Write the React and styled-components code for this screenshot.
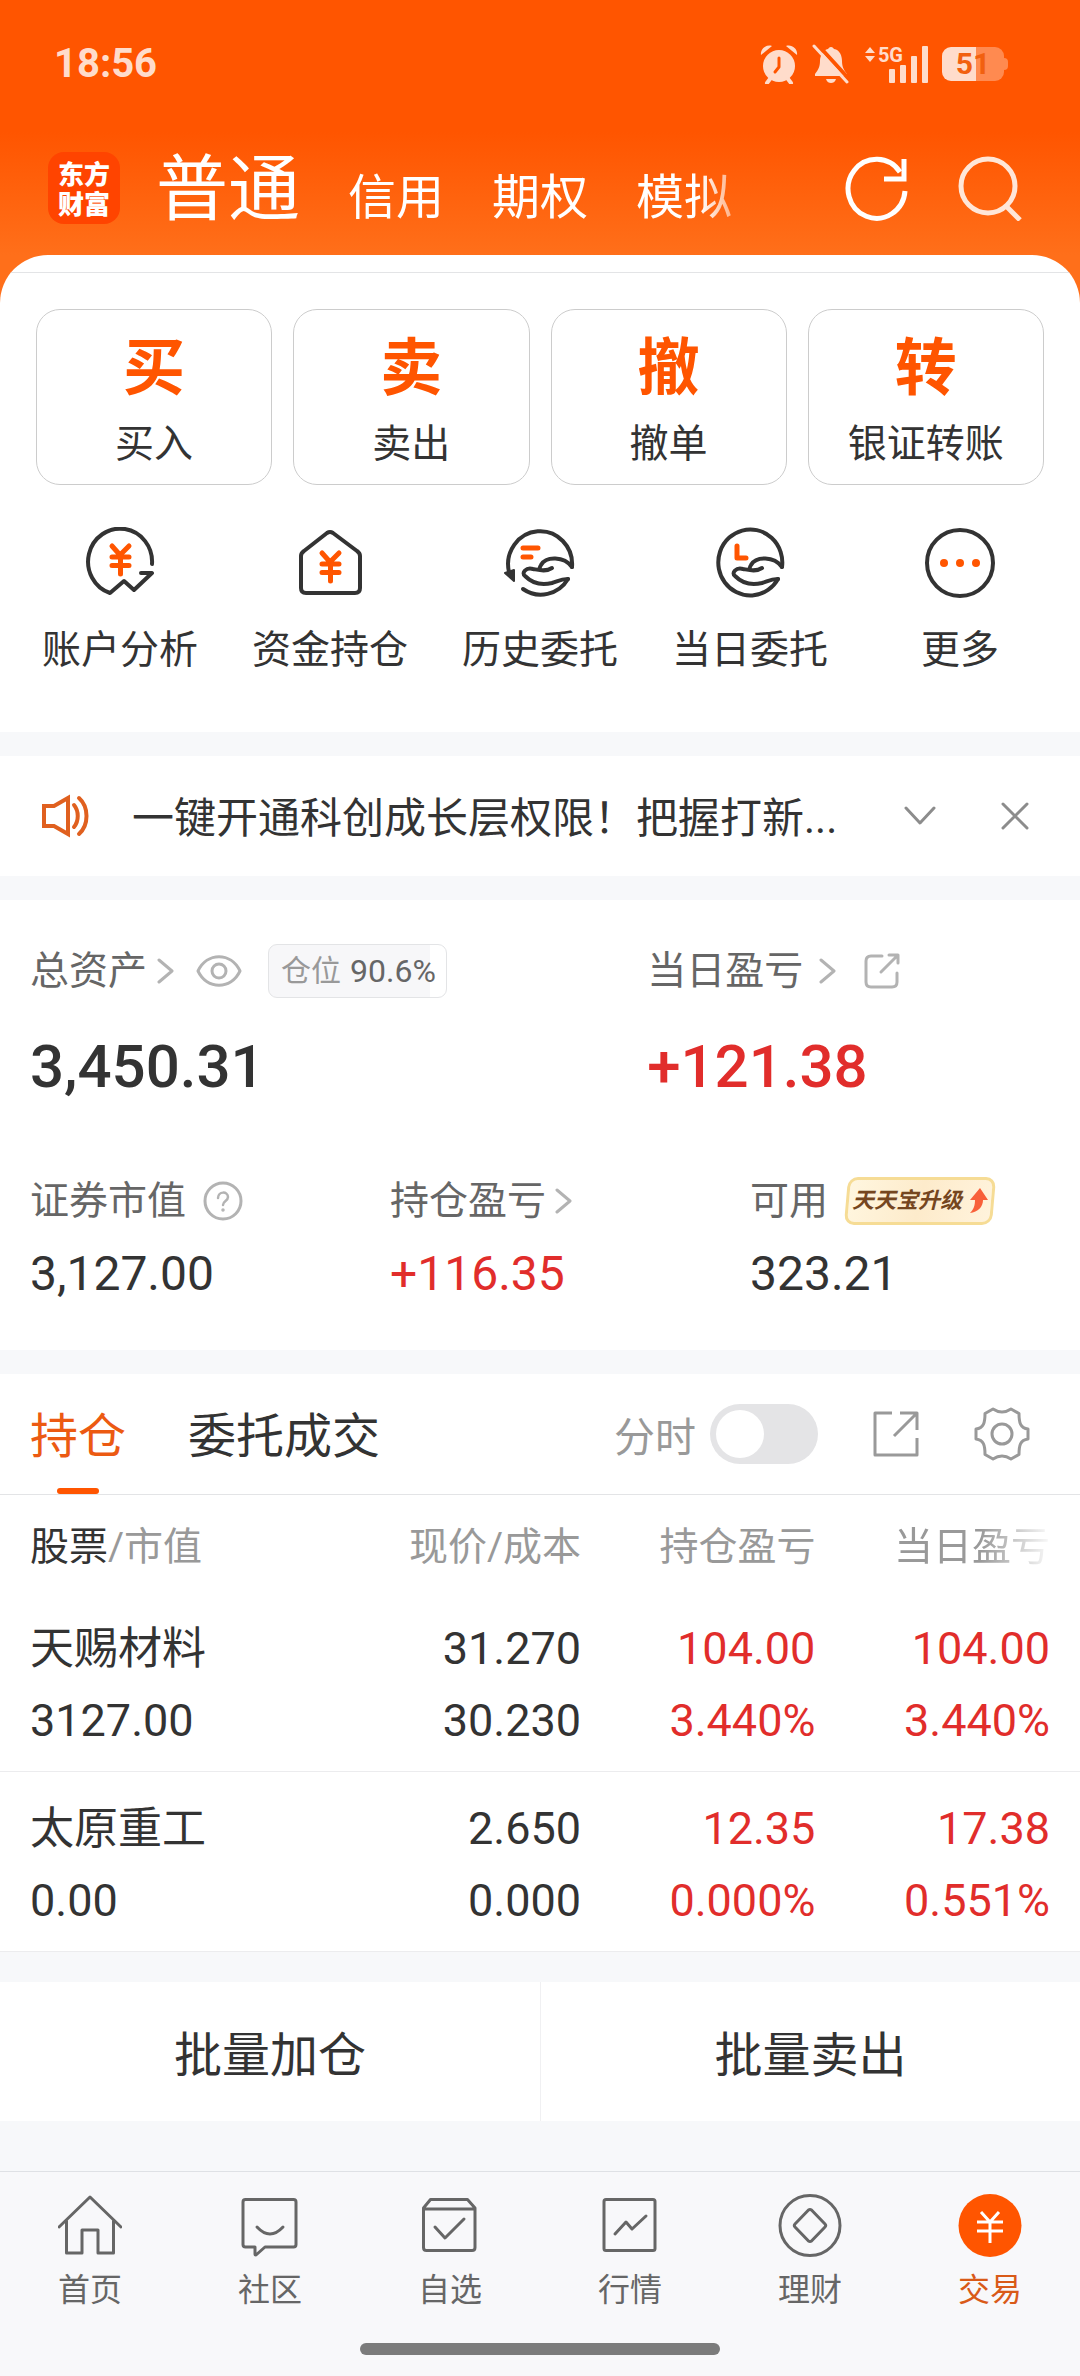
import React, { useState } from "react";
import styled, { createGlobalStyle, css } from "styled-components";

const color = {
  brand: "#ff5500",
  brandText: "#ec5a12",
  text: "#333333",
  sub: "#666666",
  mute: "#999999",
  faint: "#b3b3b3",
  rise: "#e12d2b",
  line: "#e3e4e6",
  band: "#f7f8fa",
  status: "#ffdccb",
};

const GlobalStyle = createGlobalStyle`
  *, *::before, *::after { box-sizing: border-box; }
  body {
    margin: 0;
    background: ${color.band};
    color: ${color.text};
    font-family: Roboto, "Noto Sans CJK SC", sans-serif;
    font-weight: 400;
  }
  button {
    margin: 0;
    padding: 0;
    border: 0;
    background: none;
    color: inherit;
    font: inherit;
    cursor: pointer;
  }
  a { color: inherit; text-decoration: none; }
  h2, p, dl, dd, dt { margin: 0; font-weight: inherit; }
  svg { display: block; flex: none; }
`;

const Screen = styled.div`
  display: flex;
  flex-direction: column;
  min-height: 100vh;
`;

/* ---------- hero ---------- */

const Hero = styled.header`
  background: linear-gradient(#ff5500 0, #ff5500 132px, #ff6f1a 255px, #ff6f1a 100%);
`;

const StatusBar = styled.div`
  display: flex;
  align-items: center;
  justify-content: space-between;
  height: 128px;
  padding: 0 72px 0 54px;
  color: ${color.status};
`;

const Clock = styled.time`
  font-size: 40px;
  font-weight: 700;
  line-height: 48px;
`;

const StatusIcons = styled.div`
  display: flex;
  align-items: center;
  gap: 14px;
`;

const Signal = styled.div`
  display: flex;
  align-items: flex-start;
  height: 38px;
`;

const Network = styled.span`
  font-size: 20px;
  font-weight: 700;
  line-height: 20px;
`;

const Bars = styled.span`
  display: flex;
  align-items: flex-end;
  gap: 5px;
  height: 38px;
  margin-left: -14px;
`;

const Bar = styled.i`
  width: 6px;
  height: ${(p) => p.$h}px;
  border-radius: 1px;
  background: ${color.status};
`;

const Battery = styled.div`
  display: flex;
  align-items: center;
  &::after {
    content: "";
    width: 4px;
    height: 12px;
    border-radius: 0 4px 4px 0;
    background: #ff8a50;
  }
`;

const BatteryBody = styled.span`
  width: 62px;
  height: 34px;
  border-radius: 9px;
  background: linear-gradient(90deg, ${color.status} 55%, #ff8a50 55%);
  color: #f2600f;
  font-size: 30px;
  font-weight: 700;
  line-height: 34px;
  text-align: center;
`;

const TopBar = styled.div`
  display: flex;
  align-items: center;
  height: 127px;
  padding: 0 56px 8px 48px;
  color: #fff;
`;

const Logo = styled.a`
  display: grid;
  place-content: center;
  width: 72px;
  height: 72px;
  margin-right: 36px;
  border-radius: 16px;
  background: #ff4400;
  font-size: 26px;
  font-weight: 900;
  line-height: 30px;
  font-family: "Noto Sans CJK SC", sans-serif;
`;

const AccountTabs = styled.nav`
  display: flex;
  flex: 1;
  align-items: baseline;
  gap: 48px;
  padding-top: 12px;
  overflow: hidden;
  white-space: nowrap;
  mask-image: linear-gradient(90deg, #000 calc(100% - 84px), transparent calc(100% - 20px));
`;

const AccountTab = styled.button`
  font-size: ${(p) => (p.$active ? 72 : 48)}px;
  line-height: 80px;
`;

const TopActions = styled.div`
  display: flex;
  align-items: center;
  gap: 48px;
  margin-left: 60px;
`;

const Panel = styled.div`
  overflow: hidden;
  border-radius: 48px 48px 0 0;
  background: #fff;
  padding: 17px 0 58px;
`;

const Hairline = styled.hr`
  margin: 0 0 36px;
  border: 0;
  border-top: 1px solid ${color.line};
`;

const TradeGrid = styled.div`
  display: grid;
  grid-template-columns: repeat(4, 1fr);
  gap: 21px;
  padding: 0 36px;
`;

const TradeCard = styled.button`
  display: flex;
  flex-direction: column;
  align-items: center;
  gap: 13px;
  padding: 23px 0 14px;
  border: 1px solid #cccccc;
  border-radius: 24px;
`;

const TradeGlyph = styled.span`
  color: ${color.brand};
  font-size: 62px;
  font-weight: 700;
  line-height: 72px;
`;

const TradeLabel = styled.span`
  font-size: 39px;
  line-height: 52px;
`;

const QuickGrid = styled.nav`
  display: grid;
  grid-template-columns: repeat(5, 1fr);
  margin-top: 42px;
  padding: 0 15px;
`;

const QuickLink = styled.a`
  display: flex;
  flex-direction: column;
  align-items: center;
  gap: 27px;
  font-size: 39px;
  line-height: 48px;
`;

/* ---------- notice ---------- */

const Notice = styled.section`
  display: flex;
  align-items: center;
  height: 120px;
  margin-top: 24px;
  padding: 0 50px 0 40px;
  background: #fff;
`;

const NoticeText = styled.p`
  flex: 1;
  min-width: 0;
  margin-left: 40px;
  padding-top: 5px;
  overflow: hidden;
  white-space: nowrap;
  font-size: 42px;
  line-height: 60px;
`;

const NoticeActions = styled.div`
  display: flex;
  align-items: center;
  gap: 64px;
`;

/* ---------- assets ---------- */

const Assets = styled.section`
  margin-top: 24px;
  padding: 44px 0 52px;
  background: #fff;
`;

const StatRow = styled.dl`
  display: grid;
  grid-template-columns: ${(p) => p.$cols};
  & + & { margin-top: 80px; }
`;

const Stat = styled.div`
  padding-left: 30px;
`;

const StatLabel = styled.dt`
  display: flex;
  align-items: center;
  height: ${(p) => (p.$large ? 54 : 48)}px;
  color: ${color.sub};
  font-size: 39px;
  line-height: 48px;
  white-space: nowrap;
`;

const StatValue = styled.dd`
  margin-top: ${(p) => (p.$large ? 39 : 25)}px;
  color: ${(p) => (p.$rise ? color.rise : color.text)};
  font-size: ${(p) => (p.$large ? 60 : 48)}px;
  font-weight: ${(p) => (p.$large ? 500 : 400)};
  line-height: ${(p) => (p.$large ? 60 : 48)}px;
`;

const IconButton = styled.button`
  display: flex;
  margin-left: ${(p) => p.$gap || 0}px;
`;

const Position = styled.span`
  display: flex;
  align-items: center;
  gap: 9px;
  height: 54px;
  margin-left: 26px;
  padding: 0 10px 0 12px;
  border: 1px solid ${color.line};
  border-radius: 9px;
  background: linear-gradient(90deg, #f7f7f9 91%, #fff 91%);
  color: ${color.mute};
  font-size: 30px;
  strong { color: ${color.sub}; font-size: 32px; font-weight: 400; }
`;

const Upgrade = styled.button`
  position: relative;
  z-index: 0;
  display: flex;
  align-items: center;
  justify-content: center;
  gap: 6px;
  width: 148px;
  height: 48px;
  margin-left: 18px;
  color: #75461f;
  font-size: 22px;
  font-style: italic;
  font-weight: 700;
  &::before {
    content: "";
    position: absolute;
    inset: 0;
    z-index: -1;
    border: 3px solid #f6dc95;
    border-radius: 10px;
    background: linear-gradient(100deg, #fff6df, #fdebcb 50%, #fff3dc);
    transform: skewX(-5deg);
  }
`;

/* ---------- holdings ---------- */

const Holdings = styled.section`
  margin-top: 24px;
  background: #fff;
`;

const Toolbar = styled.div`
  display: flex;
  align-items: stretch;
  height: 121px;
  padding: 0 50px 0 30px;
  border-bottom: 1px solid ${color.line};
`;

const ViewTab = styled.button`
  display: flex;
  flex-direction: column;
  align-items: center;
  margin-right: 62px;
  padding-top: 6px;
  color: ${(p) => (p.$active ? color.brandText : color.text)};
  font-size: 48px;
  line-height: 114px;
  ${(p) =>
    p.$active &&
    css`
      &::after {
        content: "";
        width: 42px;
        height: 6px;
        margin-top: -6px;
        border-radius: 3px;
        background: ${color.brand};
      }
    `}
`;

const Tools = styled.div`
  display: flex;
  align-items: center;
  margin-left: auto;
`;

const SwitchLabel = styled.label`
  display: flex;
  align-items: center;
  gap: 14px;
  color: ${color.mute};
  font-size: 41px;
`;

const Switch = styled.input`
  appearance: none;
  width: 108px;
  height: 60px;
  margin: 0;
  padding: 6px;
  border-radius: 30px;
  background: #e4e4e6;
  &::before {
    content: "";
    display: block;
    width: 48px;
    height: 48px;
    border-radius: 50%;
    background: #fff;
  }
  &:checked { background: ${color.brand}; }
  &:checked::before { margin-left: auto; }
`;

const Table = styled.table`
  width: 100%;
  border-collapse: collapse;
  table-layout: fixed;
`;

const HeadCell = styled.th`
  width: ${(p) => p.$w || "auto"};
  height: 96px;
  padding: 0;
  color: ${color.mute};
  font-size: 39px;
  font-weight: 400;
  text-align: right;
  white-space: nowrap;
  &:first-child { padding-left: 30px; text-align: left; }
  &:last-child {
    padding-right: 30px;
    mask-image: linear-gradient(90deg, #000 calc(100% - 100px), transparent calc(100% - 26px));
  }
  b { color: ${color.text}; font-weight: 400; }
`;

const Row = styled.tr`
  border-bottom: 1px solid #ececee;
`;

const Cell = styled.td`
  height: 180px;
  padding: 8px 0 0;
  color: ${(p) => (p.$rise ? color.rise : color.text)};
  font-size: 45px;
  line-height: 72px;
  text-align: right;
  &:first-child { padding-left: 30px; text-align: left; }
  &:last-child { padding-right: 30px; }
`;

const Line = styled.div`
  font-size: ${(p) => (p.$name ? 44 : 45)}px;
`;

const BatchBar = styled.div`
  display: grid;
  grid-template-columns: 1fr 1fr;
  margin-top: 30px;
  background: #fff;
`;

const BatchButton = styled.button`
  height: 139px;
  font-size: 48px;
  & + & { border-left: 1px solid #f0f0f2; }
`;

/* ---------- bottom navigation ---------- */

const Footer = styled.footer`
  margin-top: auto;
  border-top: 1px solid #dfe1e5;
  background: #f8f8fa;
`;

const NavBar = styled.nav`
  display: grid;
  grid-template-columns: repeat(6, 1fr);
  padding-top: 22px;
`;

const NavLink = styled.a`
  display: flex;
  flex-direction: column;
  align-items: center;
  gap: 12px;
  color: ${(p) => (p.$active ? "#d95a18" : color.sub)};
  font-size: 32px;
  line-height: 40px;
`;

const HomeIndicator = styled.div`
  width: 33.3%;
  height: 12px;
  margin: 33px auto 21px;
  border-radius: 6px;
  background: #7b7b7b;
`;

/* ---------- icons ---------- */

const Icon = ({ w, h = w, sw = 3, stroke = "currentColor", children }) => (
  <svg width={w} height={h} viewBox={`0 0 ${w} ${h}`} fill="none" stroke={stroke}
    strokeWidth={sw} strokeLinecap="round" strokeLinejoin="round" aria-hidden="true">
    {children}
  </svg>
);

const AlarmIcon = () => (
  <Icon w={38} h={40} sw={4}>
    <circle cx="19" cy="22" r="16" fill="currentColor" stroke="none" />
    <path d="M1 11C0 5 6 0 12 2ZM37 11c1-6-5-11-11-9Z" fill="currentColor" stroke="none" />
    <path d="M10 35l-3 4M28 35l3 4" />
    <path d="M19 14v9l-4 5" stroke={color.brand} strokeWidth="3" />
  </Icon>
);

const BellOffIcon = () => (
  <Icon w={38} h={40} sw={3}>
    <path d="M19 3c2 0 2 1 3 2 6 1 8 7 8 12 0 6 2 9 5 13v2H3v-2c3-4 5-7 5-13 0-5 3-11 8-12 1-1 1-2 3-2Z" fill="currentColor" stroke="none" />
    <path d="M14 35h10c-1 3-3 4-5 4s-4-1-5-4Z" fill="currentColor" stroke="none" />
    <path d="M5 0l32 35" stroke={color.brand} strokeWidth="4" />
    <path d="M2 2l33 36" />
  </Icon>
);

const DataArrows = () => (
  <Icon w={14} h={18} sw={0}>
    <path d="M1 8L6 2l5 6ZM1 11h10l-5 6Z" fill="currentColor" />
  </Icon>
);

const RefreshIcon = () => (
  <Icon w={66} sw={5}>
    <path d="M61 36A28.500 29.500 0 1 1 56 17" strokeLinecap="butt" />
    <path d="M60 4v20H40" strokeLinecap="butt" strokeLinejoin="miter" />
  </Icon>
);

const SearchIcon = () => (
  <Icon w={66} sw={5} stroke="#ffe6d8">
    <circle cx="30" cy="31" r="27" />
    <path d="M48 51l14 14" strokeLinecap="butt" />
  </Icon>
);

const Yuan = ({ y = 0 }) => (
  <g stroke={color.brand} strokeWidth="5" transform={`translate(0 ${y})`}>
    <path d="M28 19l8 9 9-9M36.500 28v19M28 30h17M28 38.500h17" />
  </g>
);

const AnalysisIcon = () => (
  <Icon w={72} sw={4}>
    <path d="M68 37A32 33 0 1 0 26 66L40 54l10 9 18-17H57" />
    <Yuan />
  </Icon>
);

const FundsIcon = () => (
  <Icon w={72} sw={4}>
    <path d="M33 6q3-2 6 0l24 18q3 2 3 5v32q0 5-5 5H12q-5 0-5-5V29q0-3 3-5Z" />
    <Yuan y={7} />
  </Icon>
);

const Hand = () => (
  <path d="M68 40C60 29 42 29 37 38Q35 41 36 43M48 41c-6 4-13 2-19 1-7-2-12 4-8 7 6 6 15 10 27 7 6-2 9-4 16-4" />
);

const HistoryIcon = () => (
  <Icon w={72} sw={4}>
    <path d="M5 45A32 33 0 1 1 68 40" />
    <path d="M64 52A32 33 0 0 1 19 62" />
    <Hand />
    <path d="M1 46l9-3v11Z" fill="currentColor" strokeWidth="2" />
    <path d="M19 21h15M19 30h8" stroke={color.brand} strokeWidth="5" />
  </Icon>
);

const TodayIcon = () => (
  <Icon w={72} sw={4}>
    <path d="M64 52A32 33 0 1 1 68 40" />
    <Hand />
    <path d="M23 19v12h9" stroke={color.brand} strokeWidth="5" />
  </Icon>
);

const MoreIcon = () => (
  <Icon w={72} sw={4}>
    <circle cx="36" cy="36" r="33" />
    <g fill={color.brand} stroke="none">
      <circle cx="20" cy="36" r="4" /><circle cx="36" cy="36" r="4" /><circle cx="52" cy="36" r="4" />
    </g>
  </Icon>
);

const SpeakerIcon = () => (
  <Icon w={52} h={44} sw={4} stroke="#e0601f">
    <path d="M4 12h10L28 4v36L14 32H4Z" strokeLinejoin="miter" />
    <path d="M34 11c5 6 5 16 0 22M39 4c10 9 10 27 0 36" />
  </Icon>
);

const ChevronDown = () => <Icon w={32} h={20} sw={3} stroke="#8c8c8c"><path d="M2 2l14 15L30 2" /></Icon>;
const CloseIcon = () => <Icon w={30} sw={3} stroke="#8c8c8c"><path d="M3 3l24 24M27 3L3 27" /></Icon>;
const ChevronRight = () => <Icon w={18} h={26} sw={3} stroke={color.faint}><path d="M2 2l13 11L2 24" /></Icon>;

const EyeIcon = () => (
  <Icon w={46} h={32} sw={3} stroke={color.faint}>
    <path d="M2 16C11-3 35-3 44 16 35 35 11 35 2 16Z" /><circle cx="23" cy="16" r="7" />
  </Icon>
);

const ShareSmall = () => (
  <Icon w={36} sw={3} stroke={color.faint}>
    <path d="M18 3H7Q2 3 2 8v21q0 5 5 5h21q5 0 5-5V20M25 2h9v8M33 3L17 19" />
  </Icon>
);

const HelpIcon = () => (
  <Icon w={40} sw={3} stroke={color.faint}>
    <circle cx="20" cy="20" r="18" />
    <path d="M15 17c0-7 10-7 10-1 0 4-5 4-5 8" strokeWidth="2.500" />
    <circle cx="20" cy="29" r="1" strokeWidth="1.500" />
  </Icon>
);

const UpArrow = () => (
  <Icon w={20} h={26} sw={0}>
    <path d="M12 0l8 12h-5c0 7-5 12-13 13 4-4 5-8 5-13H2Z" fill="#f8603a" />
  </Icon>
);

const ShareIcon = () => (
  <Icon w={48} sw={3} stroke={color.mute}>
    <path d="M20 3H3v42h42V28M28 3h17v17M45 3L22 26" strokeLinecap="butt" />
  </Icon>
);

const GearIcon = () => (
  <Icon w={56} sw={3} stroke={color.mute}>
    <path d="M19 3Q28 9 37 3l8 4.500C45 16 46 22 54 23v10C46 34 45 40 45 48.500L37 53Q28 47 19 53l-8-4.500C11 40 10 34 2 33V23C10 22 11 16 11 7.500Z" />
    <circle cx="28" cy="28" r="10" />
  </Icon>
);

const HomeIcon = () => (
  <Icon w={64}><path d="M1 33L32 3l31 30M8.500 27v32H24V36h16v23h15.500V27" /></Icon>
);
const CommunityIcon = () => (
  <Icon w={64}>
    <path d="M7.500 5.500h48q2.500 0 2.500 2.500v42.500q0 2.500-2.500 2.500H27l-9 8q-1 0-1-1v-7H7.500Q5 53 5 50.500V8q0-2.500 2.500-2.500Z" />
    <path d="M19 33q13 14 26 0" />
  </Icon>
);
const WatchIcon = () => (
  <Icon w={64}>
    <path d="M5.500 14l7-8.500h37l7.500 8.500v39.500q0 3-3 3h-45.500q-3 0-3-3ZM6 15h51M17 33l10 11 19-19" />
  </Icon>
);
const MarketIcon = () => (
  <Icon w={64}><rect x="6" y="5.500" width="51" height="51" rx="2" /><path d="M17 40l11-12 6 7 14-13" /></Icon>
);
const WealthIcon = () => (
  <Icon w={64}>
    <circle cx="32" cy="31.500" r="30" />
    <path d="M30.500 16q1.500-1 3 0L47 30q1.500 1.500 0 3L33.500 47q-1.500 1-3 0L17 33q-1.500-1.500 0-3Z" />
  </Icon>
);
const TradeIcon = () => (
  <Icon w={64} stroke="#fff">
    <circle cx="32" cy="31.500" r="31.500" fill={color.brand} stroke="none" />
    <path d="M23 18l9 10 9-10M32 28v21M19 28h26M19 37h26" strokeLinecap="butt" />
  </Icon>
);

/* ---------- data ---------- */

const accounts = ["普通", "信用", "期权", "模拟"];
const trades = [["买", "买入"], ["卖", "卖出"], ["撤", "撤单"], ["转", "银证转账"]];
const quick = [
  ["账户分析", AnalysisIcon], ["资金持仓", FundsIcon], ["历史委托", HistoryIcon],
  ["当日委托", TodayIcon], ["更多", MoreIcon],
];
const holdings = [
  { name: "天赐材料", value: "3127.00", price: "31.270", cost: "30.230", profit: "104.00", profitRate: "3.440%", day: "104.00", dayRate: "3.440%" },
  { name: "太原重工", value: "0.00", price: "2.650", cost: "0.000", profit: "12.35", profitRate: "0.000%", day: "17.38", dayRate: "0.551%" },
];
const nav = [
  ["首页", HomeIcon], ["社区", CommunityIcon], ["自选", WatchIcon],
  ["行情", MarketIcon], ["理财", WealthIcon], ["交易", TradeIcon],
];

export default function App() {
  const [minute, setMinute] = useState(false);
  const [view, setView] = useState("持仓");

  return (
    <Screen>
      <GlobalStyle />
      <Hero>
        <StatusBar>
          <Clock>18:56</Clock>
          <StatusIcons>
            <AlarmIcon />
            <BellOffIcon />
            <Signal>
              <DataArrows />
              <Network>5G</Network>
              <Bars><Bar $h={14} /><Bar $h={18} /><Bar $h={27} /><Bar $h={37} /></Bars>
            </Signal>
            <Battery><BatteryBody>51</BatteryBody></Battery>
          </StatusIcons>
        </StatusBar>
        <TopBar>
          <Logo href="#home"><span>东方<br />财富</span></Logo>
          <AccountTabs>
            {accounts.map((name, i) => <AccountTab key={name} $active={i === 0}>{name}</AccountTab>)}
          </AccountTabs>
          <TopActions>
            <IconButton aria-label="刷新"><RefreshIcon /></IconButton>
            <IconButton aria-label="搜索"><SearchIcon /></IconButton>
          </TopActions>
        </TopBar>
        <Panel>
          <Hairline />
          <TradeGrid>
            {trades.map(([glyph, label]) => (
              <TradeCard key={label}>
                <TradeGlyph>{glyph}</TradeGlyph>
                <TradeLabel>{label}</TradeLabel>
              </TradeCard>
            ))}
          </TradeGrid>
          <QuickGrid>
            {quick.map(([label, Glyph]) => (
              <QuickLink key={label} href="#quick"><Glyph />{label}</QuickLink>
            ))}
          </QuickGrid>
        </Panel>
      </Hero>

      <Notice>
        <SpeakerIcon />
        <NoticeText>一键开通科创成长层权限！把握打新...</NoticeText>
        <NoticeActions>
          <IconButton aria-label="展开"><ChevronDown /></IconButton>
          <IconButton aria-label="关闭"><CloseIcon /></IconButton>
        </NoticeActions>
      </Notice>

      <Assets>
        <StatRow $cols="4fr 3fr">
          <Stat>
            <StatLabel $large>
              总资产
              <IconButton $gap={10} aria-label="总资产详情"><ChevronRight /></IconButton>
              <IconButton $gap={21} aria-label="隐藏金额"><EyeIcon /></IconButton>
              <Position>仓位<strong>90.6%</strong></Position>
            </StatLabel>
            <StatValue $large>3,450.31</StatValue>
          </Stat>
          <Stat>
            <StatLabel $large>
              当日盈亏
              <IconButton $gap={16} aria-label="当日盈亏详情"><ChevronRight /></IconButton>
              <IconButton $gap={27} aria-label="分享"><ShareSmall /></IconButton>
            </StatLabel>
            <StatValue $large $rise>+121.38</StatValue>
          </Stat>
        </StatRow>
        <StatRow $cols="repeat(3, 1fr)">
          <Stat>
            <StatLabel>
              证券市值
              <IconButton $gap={17} aria-label="说明"><HelpIcon /></IconButton>
            </StatLabel>
            <StatValue>3,127.00</StatValue>
          </Stat>
          <Stat>
            <StatLabel>
              持仓盈亏
              <IconButton $gap={9} aria-label="持仓盈亏详情"><ChevronRight /></IconButton>
            </StatLabel>
            <StatValue $rise>+116.35</StatValue>
          </Stat>
          <Stat>
            <StatLabel>
              可用
              <Upgrade>天天宝升级<UpArrow /></Upgrade>
            </StatLabel>
            <StatValue>323.21</StatValue>
          </Stat>
        </StatRow>
      </Assets>

      <Holdings>
        <Toolbar>
          {["持仓", "委托成交"].map((name) => (
            <ViewTab key={name} $active={view === name} onClick={() => setView(name)}>{name}</ViewTab>
          ))}
          <Tools>
            <SwitchLabel>
              分时
              <Switch type="checkbox" checked={minute} onChange={(e) => setMinute(e.target.checked)} />
            </SwitchLabel>
            <IconButton $gap={54} aria-label="分享持仓"><ShareIcon /></IconButton>
            <IconButton $gap={54} aria-label="设置"><GearIcon /></IconButton>
          </Tools>
        </Toolbar>
        <Table>
          <thead>
            <tr>
              <HeadCell><b>股票</b>/市值</HeadCell>
              <HeadCell $w="25%">现价/成本</HeadCell>
              <HeadCell $w="21.7%">持仓盈亏</HeadCell>
              <HeadCell $w="24.5%">当日盈亏</HeadCell>
            </tr>
          </thead>
          <tbody>
            {holdings.map((h) => (
              <Row key={h.name}>
                <Cell><Line $name>{h.name}</Line><Line>{h.value}</Line></Cell>
                <Cell><Line>{h.price}</Line><Line>{h.cost}</Line></Cell>
                <Cell $rise><Line>{h.profit}</Line><Line>{h.profitRate}</Line></Cell>
                <Cell $rise><Line>{h.day}</Line><Line>{h.dayRate}</Line></Cell>
              </Row>
            ))}
          </tbody>
        </Table>
      </Holdings>

      <BatchBar>
        <BatchButton>批量加仓</BatchButton>
        <BatchButton>批量卖出</BatchButton>
      </BatchBar>

      <Footer>
        <NavBar>
          {nav.map(([label, Glyph]) => (
            <NavLink key={label} href="#nav" $active={label === "交易"}><Glyph />{label}</NavLink>
          ))}
        </NavBar>
        <HomeIndicator />
      </Footer>
    </Screen>
  );
}
